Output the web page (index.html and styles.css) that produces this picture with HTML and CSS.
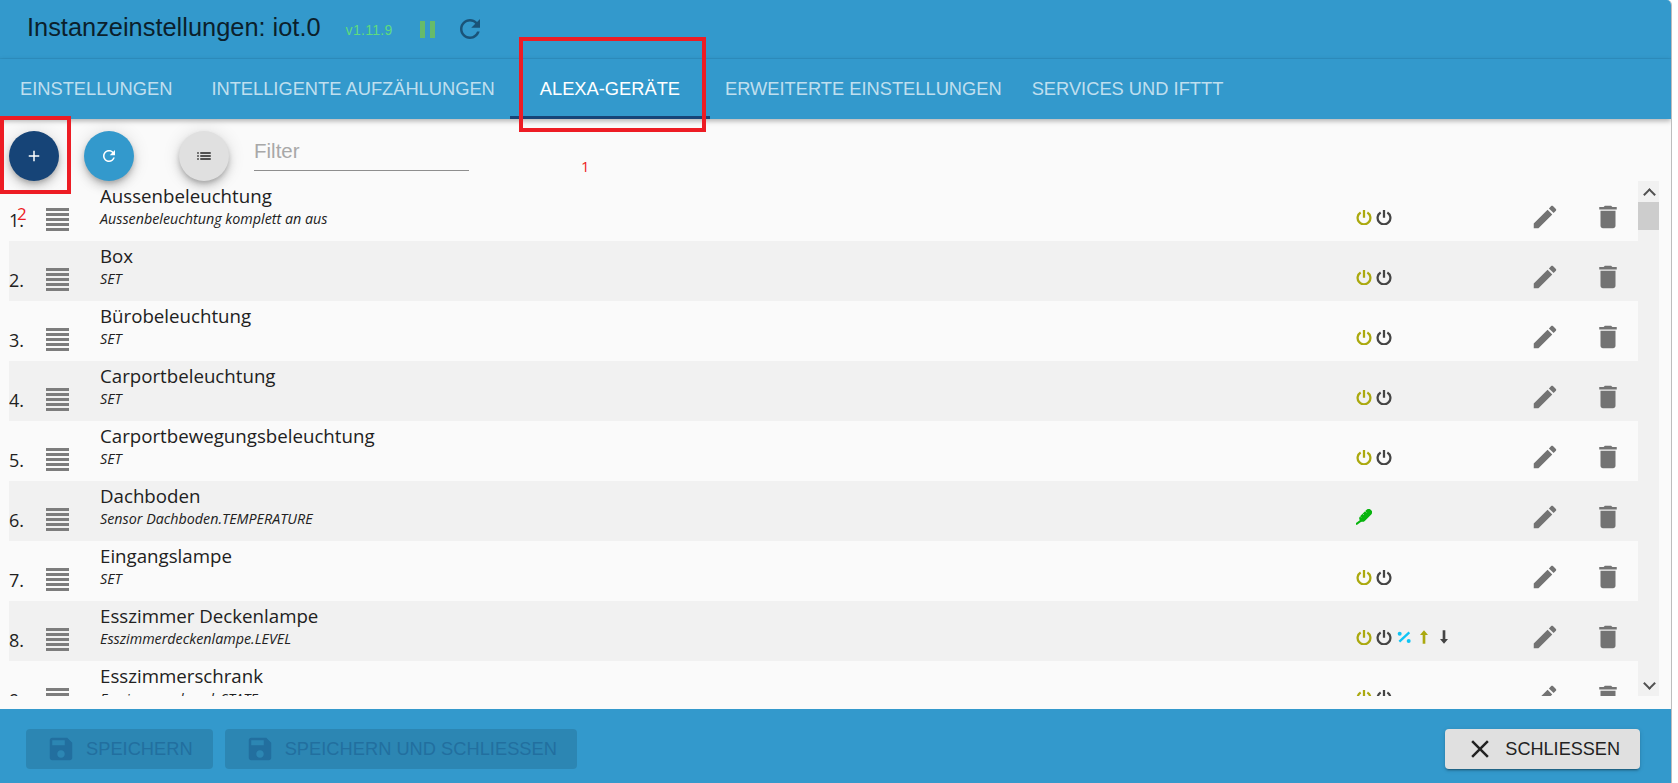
FILE: index.html
```html
<!DOCTYPE html>
<html>
<head>
<meta charset="utf-8" />
    <title>Instanzeinstellungen: iot.0</title>
    <link rel="stylesheet" href="styles.css">
</head>
<body>
    <svg class="sprite" xmlns="http://www.w3.org/2000/svg">
        <symbol id="i_refresh" viewBox="0 0 24 24"><path d="M17.65 6.35C16.2 4.9 14.21 4 12 4c-4.42 0-7.99 3.58-7.99 8s3.57 8 7.99 8c3.73 0 6.84-2.55 7.73-6h-2.08c-.82 2.33-3.04 4-5.65 4-3.31 0-6-2.69-6-6s2.69-6 6-6c1.66 0 3.14.69 4.22 1.78L13 11h7V4l-2.35 2.35z"/></symbol>
        <symbol id="i_add" viewBox="0 0 24 24"><path d="M19 13h-6v6h-2v-6H5v-2h6V5h2v6h6v2z"/></symbol>
        <symbol id="i_list" viewBox="0 0 24 24"><path d="M3 13h2v-2H3v2zm0 4h2v-2H3v2zm0-8h2V7H3v2zm4 4h14v-2H7v2zm0 4h14v-2H7v2zM7 7v2h14V7H7z"/></symbol>
        <symbol id="i_drag" viewBox="0 0 23 23"><path d="M0 0h23v3H0zM0 5h23v3H0zM0 10h23v3H0zM0 15h23v3H0zM0 20h23v3H0z"/></symbol>
        <symbol id="i_power" viewBox="0 0 24 24"><path fill="none" stroke="currentColor" stroke-width="3.4" d="M12 1.500v11.500M7 5.200a9.600 9.600 0 1 0 10 0"/></symbol>
        <symbol id="i_percent" viewBox="0 0 24 24"><path fill="none" stroke="currentColor" stroke-width="3.5" d="M20 5L5 19"/><circle cx="5.5" cy="7" r="3" fill="currentColor"/><circle cx="19" cy="18" r="3" fill="currentColor"/></symbol>
        <symbol id="i_up" viewBox="0 0 24 24"><path fill="currentColor" d="M12 2l-6 7h4v13h4V9h4z"/></symbol>
        <symbol id="i_down" viewBox="0 0 24 24"><path fill="currentColor" d="M12 22l6-7h-4V2h-4v13H6z"/></symbol>
        <symbol id="i_temp" viewBox="0 0 24 24"><path fill="none" stroke="currentColor" stroke-width="10" stroke-linecap="round" d="M10 14l9-9"/><path fill="none" stroke="currentColor" stroke-width="3" d="M0 23l8-6"/><path fill="none" stroke="#f1f1f1" stroke-width="1.2" d="M6 11l1.500 1.500M10 7l1.500 1.500M14 3.500l1.500 1.500"/></symbol>
        <symbol id="i_edit" viewBox="0 0 24 24"><path d="M3 17.25V21h3.750L17.810 9.940l-3.750-3.750L3 17.250zM20.710 7.040c.39-.39.39-1.020 0-1.410l-2.340-2.340c-.39-.39-1.020-.39-1.410 0l-1.830 1.830 3.750 3.750 1.830-1.830z"/></symbol>
        <symbol id="i_delete" viewBox="0 0 24 24"><path d="M6 19c0 1.100.9 2 2 2h8c1.100 0 2-.9 2-2V7H6v12zM19 4h-3.500l-1-1h-5l-1 1H5v2h14V4z"/></symbol>
        <symbol id="i_save" viewBox="0 0 24 24"><path d="M17 3H5c-1.110 0-2 .9-2 2v14c0 1.100.89 2 2 2h14c1.100 0 2-.9 2-2V7l-4-4zm-5 16c-1.660 0-3-1.340-3-3s1.340-3 3-3 3 1.340 3 3-1.340 3-3 3zm3-10H5V5h10v4z"/></symbol>
        <symbol id="i_close" viewBox="0 0 24 24"><path d="M19 6.410L17.590 5 12 10.590 6.410 5 5 6.410 10.590 12 5 17.590 6.410 19 12 13.410 17.590 19 19 17.590 13.410 12z"/></symbol>
    </svg>

    <div class="dialog">
        <div class="title_bar">
            <h4>Instanzeinstellungen: iot.0</h4>
            <span class="version">v1.11.9</span>
            <span class="pause"><i></i><i></i></span>
            <svg class="title_refresh"><use href="#i_refresh"/></svg>
        </div>
        <div class="tabs">
            <a class="tab tab_first">Einstellungen</a>
            <a class="tab">Intelligente Aufzählungen</a>
            <a class="tab tab_active">Alexa-Geräte</a>
            <a class="tab">Erweiterte Einstellungen</a>
            <a class="tab">Services und IFTTT</a>
        </div>

        <div class="toolbar">
            <button class="fab fab_add"><svg><use href="#i_add"/></svg></button>
            <button class="fab fab_refresh"><svg><use href="#i_refresh"/></svg></button>
            <button class="fab fab_list"><svg><use href="#i_list"/></svg></button>
            <input class="filter" type="text" placeholder="Filter" />
        </div>

        <div class="list_wrap">
            <div class="list">
                <div class="row">
                    <span class="num">1.</span>
                    <svg class="drag"><use href="#i_drag"/></svg>
                    <div class="info"><div class="name">Aussenbeleuchtung</div><div class="sub">Aussenbeleuchtung komplett an aus</div></div>
                    <div class="types"><svg class="c_on"><use href="#i_power"/></svg><svg class="c_off"><use href="#i_power"/></svg></div>
                    <svg class="act"><use href="#i_edit"/></svg>
                    <svg class="act"><use href="#i_delete"/></svg>
                </div>
                <div class="row">
                    <span class="num">2.</span>
                    <svg class="drag"><use href="#i_drag"/></svg>
                    <div class="info"><div class="name">Box</div><div class="sub">SET</div></div>
                    <div class="types"><svg class="c_on"><use href="#i_power"/></svg><svg class="c_off"><use href="#i_power"/></svg></div>
                    <svg class="act"><use href="#i_edit"/></svg>
                    <svg class="act"><use href="#i_delete"/></svg>
                </div>
                <div class="row">
                    <span class="num">3.</span>
                    <svg class="drag"><use href="#i_drag"/></svg>
                    <div class="info"><div class="name">Bürobeleuchtung</div><div class="sub">SET</div></div>
                    <div class="types"><svg class="c_on"><use href="#i_power"/></svg><svg class="c_off"><use href="#i_power"/></svg></div>
                    <svg class="act"><use href="#i_edit"/></svg>
                    <svg class="act"><use href="#i_delete"/></svg>
                </div>
                <div class="row">
                    <span class="num">4.</span>
                    <svg class="drag"><use href="#i_drag"/></svg>
                    <div class="info"><div class="name">Carportbeleuchtung</div><div class="sub">SET</div></div>
                    <div class="types"><svg class="c_on"><use href="#i_power"/></svg><svg class="c_off"><use href="#i_power"/></svg></div>
                    <svg class="act"><use href="#i_edit"/></svg>
                    <svg class="act"><use href="#i_delete"/></svg>
                </div>
                <div class="row">
                    <span class="num">5.</span>
                    <svg class="drag"><use href="#i_drag"/></svg>
                    <div class="info"><div class="name">Carportbewegungsbeleuchtung</div><div class="sub">SET</div></div>
                    <div class="types"><svg class="c_on"><use href="#i_power"/></svg><svg class="c_off"><use href="#i_power"/></svg></div>
                    <svg class="act"><use href="#i_edit"/></svg>
                    <svg class="act"><use href="#i_delete"/></svg>
                </div>
                <div class="row">
                    <span class="num">6.</span>
                    <svg class="drag"><use href="#i_drag"/></svg>
                    <div class="info"><div class="name">Dachboden</div><div class="sub">Sensor Dachboden.TEMPERATURE</div></div>
                    <div class="types"><svg class="c_temp"><use href="#i_temp"/></svg></div>
                    <svg class="act"><use href="#i_edit"/></svg>
                    <svg class="act"><use href="#i_delete"/></svg>
                </div>
                <div class="row">
                    <span class="num">7.</span>
                    <svg class="drag"><use href="#i_drag"/></svg>
                    <div class="info"><div class="name">Eingangslampe</div><div class="sub">SET</div></div>
                    <div class="types"><svg class="c_on"><use href="#i_power"/></svg><svg class="c_off"><use href="#i_power"/></svg></div>
                    <svg class="act"><use href="#i_edit"/></svg>
                    <svg class="act"><use href="#i_delete"/></svg>
                </div>
                <div class="row">
                    <span class="num">8.</span>
                    <svg class="drag"><use href="#i_drag"/></svg>
                    <div class="info"><div class="name">Esszimmer Deckenlampe</div><div class="sub">Esszimmerdeckenlampe.LEVEL</div></div>
                    <div class="types"><svg class="c_on"><use href="#i_power"/></svg><svg class="c_off"><use href="#i_power"/></svg><svg class="c_pct"><use href="#i_percent"/></svg><svg class="c_on"><use href="#i_up"/></svg><svg class="c_off"><use href="#i_down"/></svg></div>
                    <svg class="act"><use href="#i_edit"/></svg>
                    <svg class="act"><use href="#i_delete"/></svg>
                </div>
                <div class="row">
                    <span class="num">9.</span>
                    <svg class="drag"><use href="#i_drag"/></svg>
                    <div class="info"><div class="name">Esszimmerschrank</div><div class="sub">Esszimmerschrank.STATE</div></div>
                    <div class="types"><svg class="c_on"><use href="#i_power"/></svg><svg class="c_off"><use href="#i_power"/></svg></div>
                    <svg class="act"><use href="#i_edit"/></svg>
                    <svg class="act"><use href="#i_delete"/></svg>
                </div>
            </div>
            <div class="scroll">
                <span class="scroll_arrow scroll_up"></span>
                <span class="scroll_thumb"></span>
                <span class="scroll_rest"></span>
                <span class="scroll_arrow scroll_down"></span>
            </div>
        </div>

        <div class="footer">
            <button class="btn btn_off"><svg><use href="#i_save"/></svg>Speichern</button>
            <button class="btn btn_off"><svg><use href="#i_save"/></svg>Speichern und schliessen</button>
            <button class="btn btn_close"><svg><use href="#i_close"/></svg>Schliessen</button>
        </div>

        <!-- annotations painted over the screenshot -->
        <div class="mark mark_tab"></div>
        <div class="mark mark_add"></div>
        <span class="mark_no mark_no1">1</span>
        <span class="mark_no mark_no2">2</span>
    </div>
</body>
</html>
```

FILE: styles.css
```css
* {
    margin:0;
    padding:0;
    box-sizing:border-box;
}
html,body {
    width:100%;
    height:100%;
    overflow:hidden;
    background:#fff;
    font-family:'Liberation Sans',Arial,sans-serif;
}
.sprite {
    display:none;
}
.dialog {
    position:relative;
    width:1672px;
    height:783px;
    display:flex;
    flex-direction:column;
    border-right:1px solid #bdbdbd;
    border-top-right-radius:5px;
    overflow:hidden;
    background:#fafafa;
}
.title_bar {
    height:59px;
    flex:none;
    display:flex;
    align-items:center;
    padding:0 0 3px 27px;
    background:#3399cc;
    border-bottom:1px solid #2f92c4;
}
.title_bar h4 {
    font-size:25.4px;
    font-weight:400;
    color:#0b1f2c;
}
.version {
    margin-left:25px;
    padding-top:4px;
    font-size:14px;
    letter-spacing:.3px;
    color:#5fdb7e;
}
.pause {
    display:flex;
    gap:5px;
    margin-left:27px;
    padding-top:3px;
}
.pause i {
    display:block;
    width:5px;
    height:17px;
    background:#66bb6a;
}
.title_refresh {
    width:30px;
    height:30px;
    margin-left:20px;
    margin-top:3px;
    fill:#1a5378;
}
.tabs {
    height:60px;
    flex:none;
    display:flex;
    padding-left:5px;
    background:#3399cc;
    box-shadow:0 2px 5px rgba(0,0,0,.3);
    position:relative;
    z-index:2;
}
.tab {
    padding:0 15px;
    line-height:60px;
    font-size:18.3px;
    font-weight:400;
    text-transform:uppercase;
    color:rgba(255,255,255,.7);
    white-space:nowrap;
}
.tab_first {
    padding-right:24px;
}
.tab_active {
    padding:0 30px;
    color:#fff;
    border-bottom:3px solid #164477;
}
.toolbar {
    height:62px;
    flex:none;
    display:flex;
    align-items:flex-start;
    padding:12px 0 0 9px;
    position:relative;
    z-index:1;
}
.fab {
    width:50px;
    height:50px;
    flex:none;
    border:0;
    border-radius:50%;
    display:flex;
    align-items:center;
    justify-content:center;
    box-shadow:0 3px 5px -1px rgba(0,0,0,.2),0 6px 10px 0 rgba(0,0,0,.14),0 1px 18px 0 rgba(0,0,0,.12);
}
.fab svg {
    width:18px;
    height:18px;
}
.fab_add {
    background:#164477;
    fill:#fff;
}
.fab_refresh {
    margin-left:25px;
    background:#3399cc;
    fill:#fff;
}
.fab_list {
    margin-left:45px;
    background:#e0e0e0;
    fill:#222;
}
.filter {
    width:215px;
    height:40px;
    margin-left:25px;
    border:0;
    border-bottom:1px solid #8e8e8e;
    background:transparent;
    font-family:'Liberation Sans',Arial,sans-serif;
    font-size:20.5px;
    outline:none;
}
.filter::placeholder {
    color:#a8a8a8;
    opacity:1;
}
.list_wrap {
    height:515px;
    flex:none;
    display:flex;
    padding-left:9px;
}
.list {
    width:1629px;
    height:515px;
    overflow:hidden;
}
.row {
    height:60px;
    display:flex;
    align-items:flex-start;
    color:#212121;
    font-family:'Open Sans','Noto Sans',sans-serif;
}
.row:nth-child(even) {
    background:#f1f1f1;
}
.num {
    width:37px;
    flex:none;
    padding-top:28px;
    font-size:18px;
    line-height:22px;
}
.drag {
    width:23px;
    height:23px;
    flex:none;
    margin:27px 31px 0 0;
    fill:#7d7d7d;
}
.info {
    flex:1;
    padding-top:3px;
}
.name {
    font-size:18.7px;
    line-height:23px;
}
.sub {
    font-size:14.3px;
    line-height:23px;
    font-style:italic;
}
.types {
    width:174px;
    flex:none;
    display:flex;
    padding-top:28px;
}
.types svg {
    width:16px;
    height:16px;
    margin-right:4px;
}
.c_on {
    color:#aba90f;
}
.c_off {
    color:#444;
}
.c_pct {
    color:#0fc4f5;
}
.c_temp {
    color:#08b40e;
}
.act {
    width:30px;
    height:30px;
    flex:none;
    margin-top:21px;
    fill:#737373;
}
.act + .act {
    margin-left:33px;
    margin-right:15px;
}
.scroll {
    width:21px;
    height:515px;
    flex:none;
    display:flex;
    flex-direction:column;
    background:#f1f1f1;
}
.scroll_arrow {
    height:21px;
    flex:none;
    position:relative;
}
.scroll_arrow:before {
    content:'';
    position:absolute;
    left:7px;
    width:7px;
    height:7px;
    border-left:2.5px solid #505050;
    border-top:2.5px solid #505050;
}
.scroll_up:before {
    top:9px;
    transform:rotate(45deg);
}
.scroll_down:before {
    top:4px;
    transform:rotate(225deg);
}
.scroll_thumb {
    height:28px;
    flex:none;
    background:#cdcdcd;
}
.scroll_rest {
    flex:1;
}
.footer {
    margin-top:13px;
    height:74px;
    flex:none;
    display:flex;
    align-items:flex-start;
    gap:12px;
    padding:20px 31px 0 26px;
    background:#3399cc;
}
.btn {
    height:40px;
    display:flex;
    align-items:center;
    padding:0 20px;
    border:0;
    border-radius:4px;
    font-family:'Liberation Sans',Arial,sans-serif;
    font-size:18.3px;
    font-weight:400;
    text-transform:uppercase;
    white-space:nowrap;
}
.btn svg {
    width:30px;
    height:30px;
    margin-right:10px;
}
.btn_off {
    background:rgba(0,0,0,.12);
    color:#226f9f;
    fill:#226f9f;
}
.btn_close {
    margin-left:auto;
    background:#e0e0e0;
    color:#222;
    fill:#222;
    font-size:18.1px;
    box-shadow:0 3px 1px -2px rgba(0,0,0,.2),0 2px 2px 0 rgba(0,0,0,.14),0 1px 5px 0 rgba(0,0,0,.12);
}
.mark {
    position:absolute;
    border:4px solid #ed1c24;
    z-index:3;
}
.mark_tab {
    left:519px;
    top:37px;
    width:187px;
    height:95px;
}
.mark_add {
    left:0;
    top:116px;
    width:71px;
    height:78px;
}
.mark_no {
    position:absolute;
    z-index:3;
    font-family:'Open Sans',sans-serif;
    color:#ed1c24;
}
.mark_no1 {
    left:581px;
    top:156px;
    font-size:15px;
}
.mark_no2 {
    left:17px;
    top:202px;
    font-size:17px;
}
```
